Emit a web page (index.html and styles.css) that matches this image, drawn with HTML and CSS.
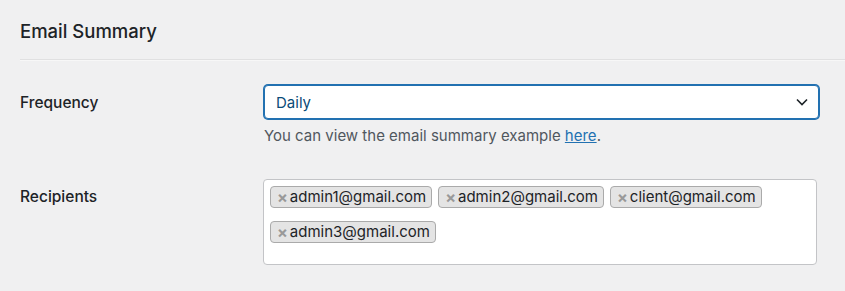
FILE: index.html
```html
<!DOCTYPE html>
<html lang="en">
<head>
<meta charset="utf-8">
<title>Email Summary</title>
<link rel="stylesheet" href="styles.css">
</head>
<body>
<div class="page">
  <h2 class="title">Email Summary</h2>
  <div class="rows">
    <div class="row">
      <div class="label">Frequency</div>
      <div class="field">
        <div class="select">
          <span class="select-value">Daily</span>
          <svg class="chevron" width="12" height="8" viewBox="0 0 12 8"><path d="M1 1.5 L6 6.5 L11 1.5" fill="none" stroke="#1d2327" stroke-width="1.6"/></svg>
        </div>
        <p class="help">You can view the email summary example <a href="#">here</a>.</p>
      </div>
    </div>
    <div class="row row-recipients">
      <div class="label">Recipients</div>
      <div class="field">
        <ul class="tags">
          <li class="tag"><span class="x">×</span>admin1@gmail.com</li>
          <li class="tag"><span class="x">×</span>admin2@gmail.com</li>
          <li class="tag"><span class="x">×</span>client@gmail.com</li>
          <li class="tag"><span class="x">×</span>admin3@gmail.com</li>
        </ul>
      </div>
    </div>
  </div>
</div>
</body>
</html>
```
FILE: styles.css
```css
html, body {
  margin: 0;
  padding: 0;
  background: #f0f0f1;
}
body {
  font-family: Inter, "Noto Sans", sans-serif;
  color: #1d2327;
  width: 845px;
  height: 291px;
  overflow: hidden;
}
.page {
  padding-left: 20px;
}
.title {
  margin: 0;
  padding-top: 19px;
  height: 60px;
  box-sizing: border-box;
  font-size: 18.5px;
  font-weight: 500;
  line-height: 24px;
  border-bottom: 1px solid #e0e0e1;
  box-shadow: 0 1px 0 #f7f7f7;
}
.rows {
  padding-top: 25px;
  padding-right: 26px;
}
.row {
  display: grid;
  grid-template-columns: 243px 1fr;
}
.label {
  font-size: 15.5px;
  font-weight: 500;
  line-height: 20px;
  padding-top: 8px;
}
.select {
  height: 34px;
  box-sizing: border-box;
  border: 1px solid #2271b1;
  box-shadow: 0 0 0 1px #2271b1;
  border-radius: 4px;
  background: #fff;
  display: flex;
  align-items: center;
  justify-content: space-between;
  padding: 0 10px 0 11px;
  margin-left: 1px;
}
.select-value {
  font-size: 15px;
  color: #0a4b78;
}
.chevron {
  display: block;
}
.help {
  margin: 7px 0 0 1px;
  font-size: 15px;
  line-height: 20px;
  color: #50575e;
}
.help a {
  color: #2271b1;
}
.row-recipients {
  margin-top: 33px;
}
.row-recipients .label {
  padding-top: 8px;
}
.tags {
  list-style: none;
  margin: 0;
  background: #fff;
  border: 1px solid #c3c4c7;
  border-radius: 4px;
  height: 86px;
  box-sizing: border-box;
  padding: 6px 6px 0 6px;
  display: flex;
  flex-wrap: wrap;
  align-content: flex-start;
  column-gap: 6px;
  row-gap: 13px;
  margin-right: 2px;
}
.tag {
  height: 22px;
  box-sizing: border-box;
  background: #e4e4e4;
  border: 1px solid #aaa;
  border-radius: 4px;
  padding: 0 5px 0 6px;
  font-size: 15px;
  line-height: 20px;
  color: #1d2327;
  display: flex;
  align-items: center;
}
.x {
  color: #999;
  font-weight: 700;
  margin-right: 2px;
  font-size: 16px;
}
```
